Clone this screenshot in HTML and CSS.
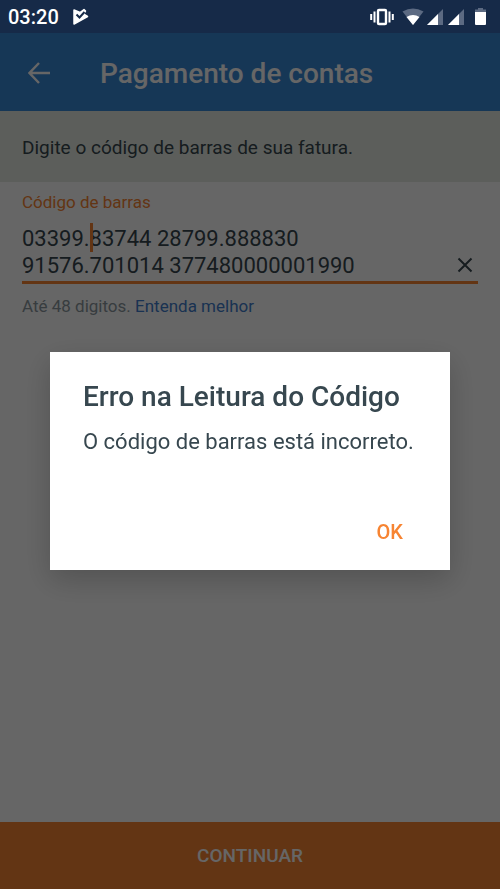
FILE: index.html
```html
<!DOCTYPE html>
<html lang="pt-BR">
<head>
<meta charset="utf-8">
<meta name="viewport" content="width=device-width, initial-scale=1">
<title>Pagamento de contas</title>
<link rel="stylesheet" href="styles.css">
</head>
<body>
<div class="status">
  <span class="clock">03:20</span>
  <svg class="app-mark" width="18" height="18" viewBox="0 0 18 18" aria-hidden="true"><path d="M2 2L8 4.500L12 1.500L13.500 3L11.500 6L15.500 8.500L2 16Z" fill="#fff" stroke="#fff" stroke-width="1.500" stroke-linejoin="round"/><path d="M4.500 6.500l3 3L12.500 4" fill="none" stroke="#162a48" stroke-width="2"/></svg>
  <svg class="indicators" width="120" height="20" viewBox="0 0 120 20" aria-hidden="true">
    <g fill="none" stroke="#fff"><rect x="8" y="3" width="8" height="14" rx="1" stroke-width="2.400"/><path d="M4.500 4.500v11M19.500 4.500v11" stroke-width="2"/><path d="M1.200 7v6M22.800 7v6" stroke-width="2"/></g>
    <path d="M32.500 4.500Q43 -1.500 53.500 4.500L43 18Z" fill="#5c6a82"/><path d="M36.500 10Q43 6 49.500 10L43 18Z" fill="#fff"/>
    <path d="M57 18L73 2V18Z" fill="#5c6a82"/><path d="M57 18L68 7V18Z" fill="#fff"/>
    <path d="M78 18L94 2V18Z" fill="#5c6a82"/><path d="M78 18L89 7V18Z" fill="#fff"/>
    <path d="M105 5V2.500h3V1h5v1.500h3V5Z" fill="#5c6a82"/><path d="M105 5h11v12q0 1-1 1h-9q-1 0-1-1Z" fill="#fff"/>
  </svg>
</div>
<header class="appbar">
  <button class="icon-button" type="button" aria-label="Voltar"><svg width="24" height="24" viewBox="0 0 24 24"><path d="M22 12H2M11 2L1.500 12L11 22" fill="none" stroke="currentColor" stroke-width="2.400"/></svg></button>
  <h1>Pagamento de contas</h1>
</header>
<main>
  <p class="intro">Digite o código de barras de sua fatura.</p>
  <div class="form">
    <label for="codigo">Código de barras</label>
    <div class="field">
      <textarea id="codigo" rows="2" spellcheck="false">03399.83744 28799.888830 91576.701014 377480000001990</textarea>
      <span class="caret"></span>
      <button class="icon-button" type="button" aria-label="Limpar"><svg width="16" height="16" viewBox="0 0 16 16"><path d="M1.500 1.500L14.500 14.500M14.500 1.500L1.500 14.500" fill="none" stroke="currentColor" stroke-width="2"/></svg></button>
    </div>
    <p class="hint">Até 48 digitos. <a href="#ajuda">Entenda melhor</a></p>
  </div>
</main>
<button class="continue" type="button">CONTINUAR</button>
<div class="scrim">
  <section class="dialog" role="alertdialog" aria-modal="true" aria-labelledby="titulo" aria-describedby="mensagem">
    <h2 id="titulo">Erro na Leitura do Código</h2>
    <p id="mensagem">O código de barras está incorreto.</p>
    <button class="ok" type="button">OK</button>
  </section>
</div>
</body>
</html>
```
FILE: styles.css
```css
* { box-sizing: border-box; }

body {
  margin: 0;
  min-height: 100vh;
  display: flex;
  flex-direction: column;
  background: #fff;
  color: #37474f;
  font-family: Roboto, "Liberation Sans", sans-serif;
}

h1, h2, p { margin: 0; font-weight: 400; }

button {
  border: 0;
  padding: 0;
  background: none;
  font: inherit;
}

svg { display: block; }

.status {
  position: relative;
  z-index: 2;
  display: flex;
  align-items: center;
  height: 33px;
  padding: 0 10px 0 8px;
  background: #162a48;
  color: #fff;
}

.clock { font-size: 20px; font-weight: 500; }
.app-mark { margin-left: 13px; }
.indicators { margin-left: auto; }

.appbar {
  display: flex;
  align-items: center;
  height: 78px;
  padding: 2px 28px 0;
  background: #3989d8;
  color: #fff;
}

.appbar h1 {
  margin-left: 48px;
  font-size: 28px;
  font-weight: 500;
}

.icon-button { color: inherit; }

main { flex: 1; }

.intro {
  padding: 25px 22px 23px;
  background: #e6ece4;
  font-size: 19px;
  line-height: 23px;
}

.form { padding: 9px 22px; }

label {
  display: block;
  color: #f78432;
  font-size: 17px;
  line-height: 22px;
}

.field {
  position: relative;
  display: flex;
  align-items: flex-end;
  margin-top: 12px;
  padding-bottom: 2px;
  border-bottom: 3px solid #f78432;
}

textarea {
  flex: 1;
  min-width: 0;
  display: block;
  margin-right: 12px;
  border: 0;
  padding: 0;
  background: none;
  color: inherit;
  font: 22px/27px Roboto, "Liberation Sans", sans-serif;
  resize: none;
  overflow: hidden;
  outline: 0;
}

.caret {
  position: absolute;
  left: 68px;
  top: -2px;
  width: 3px;
  height: 29px;
  background: #f78432;
}

.field .icon-button { padding: 6px 5px; }

.hint {
  margin-top: 11px;
  color: #8b979e;
  font-size: 17px;
  line-height: 22px;
}

.hint a { color: #3f7dcc; text-decoration: none; }

.continue {
  height: 67px;
  background: #f78432;
  color: #fff;
  font-size: 19px;
  font-weight: 500;
}

.scrim {
  position: fixed;
  inset: 0;
  display: grid;
  place-items: center;
  padding-top: 33px;
  background: rgba(0, 0, 0, .6);
}

.dialog {
  display: flex;
  flex-direction: column;
  width: 80%;
  padding: 28px 33px 24px;
  background: #fff;
  box-shadow: 0 10px 28px rgba(0, 0, 0, .2);
}

.dialog h2 {
  font-size: 28px;
  font-weight: 500;
  line-height: 34px;
}

.dialog p {
  margin-top: 14px;
  font-size: 22px;
  line-height: 28px;
  white-space: nowrap;
}

.ok {
  align-self: flex-end;
  margin-top: 62px;
  padding: 0 14px;
  color: #f78432;
  font-size: 20px;
  font-weight: 500;
  line-height: 28px;
}
```
